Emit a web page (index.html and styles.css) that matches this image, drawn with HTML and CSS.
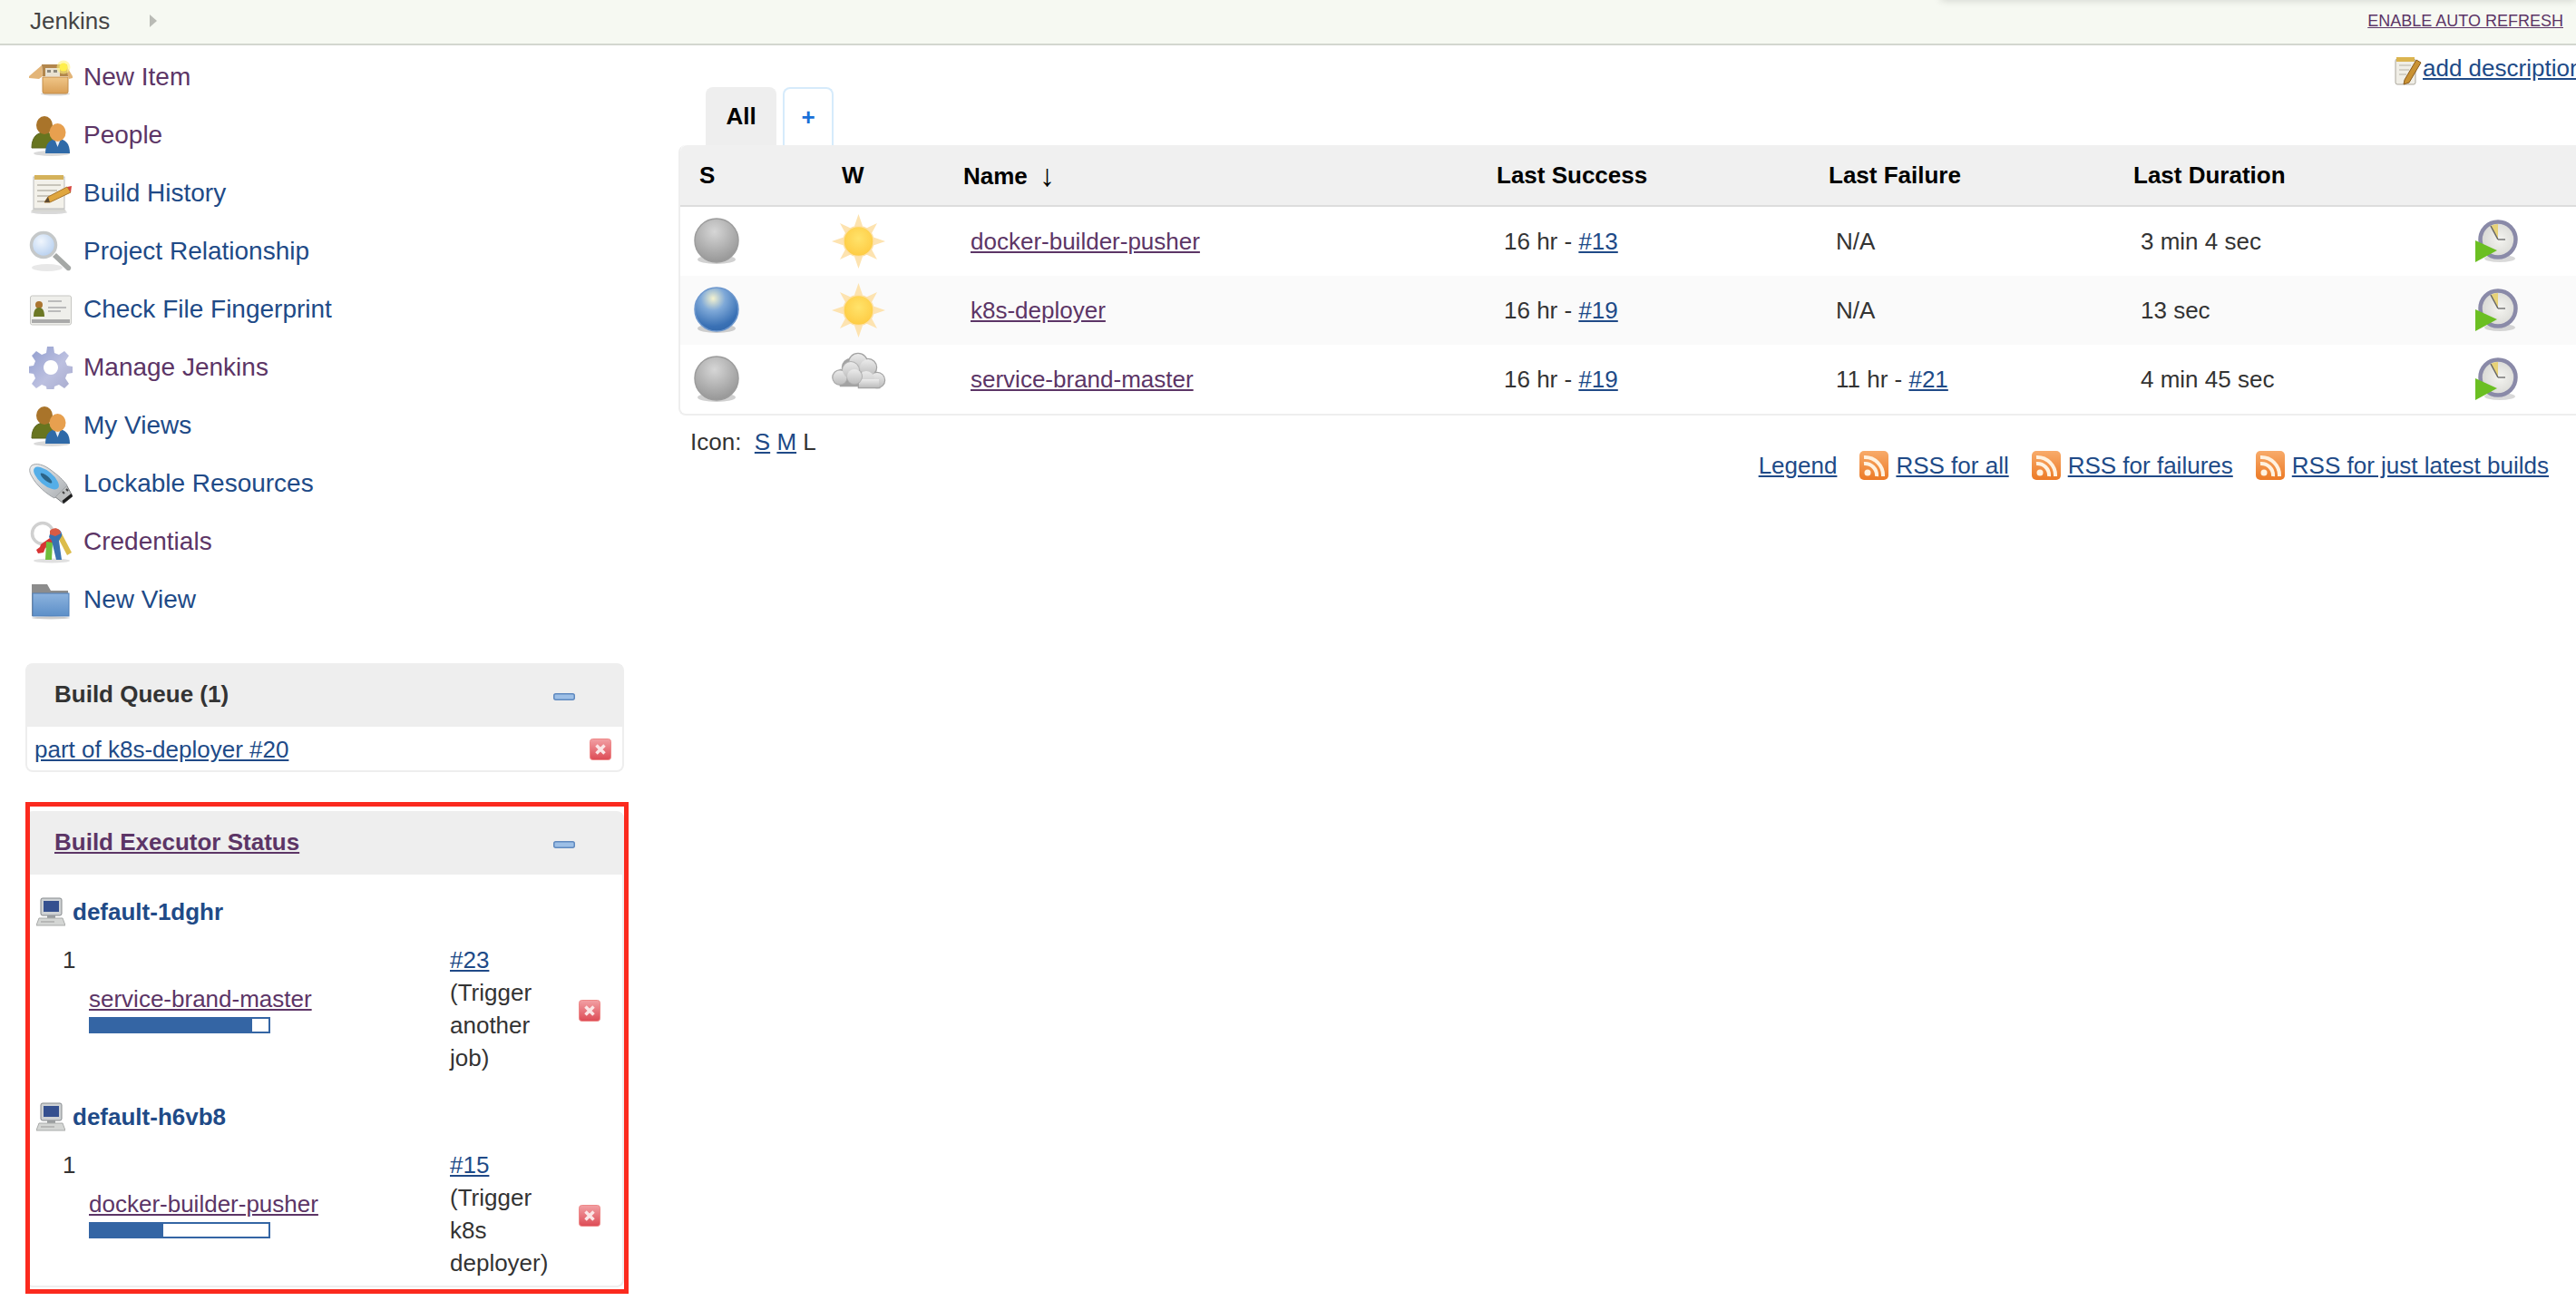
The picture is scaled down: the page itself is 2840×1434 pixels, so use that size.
FILE: index.html
```html
<!DOCTYPE html>
<html lang="en">
<head>
<meta charset="utf-8">
<title>Jenkins</title>
<link rel="stylesheet" href="styles.css">
</head>
<body>
<svg class="defs" aria-hidden="true">
  <defs>
    <radialGradient id="gGrey" cx=".45" cy=".3" r=".75"><stop offset="0" stop-color="#d6d6d6"/><stop offset=".6" stop-color="#adadad"/><stop offset="1" stop-color="#939393"/></radialGradient>
    <radialGradient id="gBlue" cx=".42" cy=".25" r=".8"><stop offset="0" stop-color="#f5f3cf"/><stop offset=".35" stop-color="#7fa9d8"/><stop offset=".8" stop-color="#3a71b5"/><stop offset="1" stop-color="#3268ab"/></radialGradient>
    <radialGradient id="gSun" cx=".5" cy=".4" r=".65"><stop offset="0" stop-color="#ffe36b"/><stop offset="1" stop-color="#fec93f"/></radialGradient>
    <linearGradient id="gCloud" x1="0" y1="0" x2="0" y2="1"><stop offset="0" stop-color="#ebebeb"/><stop offset="1" stop-color="#bdbdbd"/></linearGradient>
    <linearGradient id="gBox" x1="0" y1="0" x2="0" y2="1"><stop offset="0" stop-color="#f0c688"/><stop offset="1" stop-color="#d99f56"/></linearGradient>
    <linearGradient id="gStop" x1="0" y1="0" x2="0" y2="1"><stop offset="0" stop-color="#f2a0a4"/><stop offset="1" stop-color="#dd4b55"/></linearGradient>
    <linearGradient id="gRss" x1="0" y1="0" x2="0" y2="1"><stop offset="0" stop-color="#f8ab6a"/><stop offset="1" stop-color="#ec7a26"/></linearGradient>
    <linearGradient id="gFolder" x1="0" y1="0" x2="0" y2="1"><stop offset="0" stop-color="#8db3de"/><stop offset="1" stop-color="#5c8fc8"/></linearGradient>
    <linearGradient id="gGear" x1="0" y1="0" x2="1" y2="1"><stop offset="0" stop-color="#8e9bcd"/><stop offset=".55" stop-color="#bcc0e0"/><stop offset="1" stop-color="#a6a9cc"/></linearGradient>
    <linearGradient id="gUsb" x1="0" y1="0" x2="1" y2="1"><stop offset="0" stop-color="#eef0f2"/><stop offset="1" stop-color="#a9adb1"/></linearGradient>
    <radialGradient id="gLens" cx=".4" cy=".35" r=".7"><stop offset="0" stop-color="#f0f6fd"/><stop offset="1" stop-color="#b3cdee"/></radialGradient>
    <radialGradient id="gFace" cx=".55" cy=".5" r=".6"><stop offset="0" stop-color="#f4f4f0"/><stop offset="1" stop-color="#d4d4d0"/></radialGradient>
    <symbol id="i-ball-grey" viewBox="0 0 52 52"><ellipse cx="25" cy="46" rx="21" ry="5" fill="#000" opacity=".18"/><circle cx="25" cy="25" r="24" fill="url(#gGrey)" stroke="#9c9c9c" stroke-width="1.5"/></symbol>
    <symbol id="i-ball-blue" viewBox="0 0 52 52"><ellipse cx="25" cy="46" rx="21" ry="5" fill="#000" opacity=".18"/><circle cx="25" cy="25" r="24" fill="url(#gBlue)" stroke="#6d97cd" stroke-width="1.5"/></symbol>
    <symbol id="i-sun" viewBox="0 0 60 60">
      <g fill="#fde3b0"><path d="M29.500 0l4.500 13h-9z"/><path d="M29.500 60l4.500-13h-9z"/><path d="M0 30l13-4.500v9z"/><path d="M59 30l-13-4.500v9z"/><path d="M9 10l13 6-6 7z"/><path d="M50 10l-13 6 6 7z"/><path d="M9 50l13-6-6-7z"/><path d="M50 50l-13-6 6-7z"/></g>
      <circle cx="29.500" cy="30" r="16.500" fill="url(#gSun)" stroke="#fde0a5" stroke-width="1.500"/>
    </symbol>
    <symbol id="i-cloud" viewBox="0 0 60 60">
      <g fill="#a3a3a3" stroke="#a3a3a3" stroke-width="2.500"><circle cx="29" cy="12" r="10"/><circle cx="40" cy="17" r="9"/><circle cx="50" cy="31" r="8"/><circle cx="9" cy="28" r="7.500"/><circle cx="21" cy="17" r="9"/><rect x="10" y="20" width="38" height="17"/><rect x="30" y="30" width="22" height="9"/></g>
      <g fill="url(#gCloud)"><circle cx="29" cy="12" r="10"/><circle cx="40" cy="17" r="9"/><circle cx="50" cy="31" r="8"/><circle cx="38" cy="30" r="9"/><rect x="30" y="30" width="22" height="9"/></g>
      <g fill="#b0b0b0"><circle cx="9" cy="28" r="8.500"/><circle cx="21" cy="20" r="10"/><circle cx="25" cy="27" r="9"/></g>
      <g fill="url(#gCloud)"><circle cx="9" cy="28" r="7.500"/><circle cx="21" cy="20" r="9"/><circle cx="25" cy="27" r="8"/></g>
    </symbol>
    <symbol id="i-clock" viewBox="0 0 48 48">
      <ellipse cx="28" cy="43" rx="17" ry="4" fill="#000" opacity=".15"/>
      <circle cx="26" cy="22" r="19.500" fill="url(#gFace)" stroke="#8a8aa8" stroke-width="4.500"/>
      <path d="M26 22L18 7A17 17 0 0 1 26 5Z" fill="#e7d278"/><path d="M26 22L18 7" stroke="#666" stroke-width="1.500"/><path d="M26 22h8" stroke="#777" stroke-width="1.500"/>
      <path d="M1 23L25 34 1 47Z" fill="#6bbf22"/>
    </symbol>
    <symbol id="i-stop" viewBox="0 0 24 24"><rect x="0.500" y="0.500" width="23" height="23" rx="3" fill="url(#gStop)" stroke="#e88" stroke-width="1"/><path d="M7.500 7.500l9 9M16.500 7.500l-9 9" stroke="#fbe6e6" stroke-width="3.500"/></symbol>
    <symbol id="i-minus" viewBox="0 0 24 8"><rect x="0.750" y="0.750" width="22.500" height="6.500" rx="2" fill="#9dbfe6" stroke="#5f89bf" stroke-width="1.500"/></symbol>
    <symbol id="i-rss" viewBox="0 0 32 32"><rect width="32" height="32" rx="5" fill="url(#gRss)"/><circle cx="9" cy="24" r="3.500" fill="#fff2e0"/><path d="M5 14a13 13 0 0 1 14 14M5 7a20 20 0 0 1 21 21" fill="none" stroke="#fff2e0" stroke-width="4"/></symbol>
    <symbol id="i-computer" viewBox="0 0 32 32"><rect x="5" y="1" width="23" height="19" rx="2" fill="#cfd2d4" stroke="#85898c" stroke-width="1"/><rect x="8" y="4" width="17" height="12" fill="#35508f"/><rect x="12" y="20" width="9" height="3" fill="#9a9d9f"/><path d="M3 23h26l3 8H0z" fill="#d4d6d4" stroke="#a9abaa" stroke-width="1"/><path d="M5 27h15" stroke="#999" stroke-width="1"/></symbol>
    <symbol id="i-note" viewBox="0 0 30 32"><rect x="1" y="3" width="22" height="28" rx="2" fill="#f0eee6" stroke="#aaa69b" stroke-width="1"/><rect x="2" y="1" width="20" height="5" fill="#dbb44f"/><path d="M5 10h13M5 15h11M5 20h8" stroke="#c9c6ba" stroke-width="1.500"/><path d="M11 26L24 4l5 3-13 22-6 2z" fill="#c99233" stroke="#8a5a1c" stroke-width="1"/></symbol>
    <symbol id="i-box" viewBox="0 0 48 48">
      <ellipse cx="29" cy="42.500" rx="16" ry="2" fill="#000" opacity=".14"/>
      <path d="M14 10h28l1 13H15z" fill="#b2864c"/><path d="M18 14h16v9H18z" fill="#e9e2d2"/><path d="M20 16h4v3h-4zM27 16h4v3h-4z" fill="#8f8a7e"/>
      <path d="M15 24h28v16a2 2 0 0 1-2 2H17a2 2 0 0 1-2-2z" fill="url(#gBox)" stroke="#c48d48" stroke-width="1"/>
      <path d="M15 23L14 11 0 23v2l11 1zM43 23l-1-10 6 10v2l-4 1z" fill="#e3b578"/>
      <circle cx="38" cy="13" r="7.500" fill="#fff27d" opacity=".6"/><circle cx="38" cy="13" r="4.500" fill="#ffef4a"/>
    </symbol>
    <symbol id="i-people" viewBox="0 0 48 48">
      <ellipse cx="25" cy="44" rx="20" ry="3" fill="#000" opacity=".15"/>
      <path d="M3 38c0-12 6-17 14-17s14 5 14 17z" fill="#68751f" stroke="#59631a" stroke-width="1"/><ellipse cx="17" cy="13" rx="9" ry="10" fill="#a9742a"/>
      <path d="M18 44c0-11 5-16 13.500-16S45 33 45 44z" fill="#2f6aa8"/><path d="M28 28h7l-3.500 9z" fill="#e8eef5"/><ellipse cx="31.500" cy="21" rx="9" ry="10" fill="#e7a04f"/>
    </symbol>
    <symbol id="i-pad" viewBox="0 0 48 48">
      <ellipse cx="22" cy="45" rx="20" ry="2" fill="#000" opacity=".15"/>
      <path d="M5 7h34v34l2 3H2l3-3z" fill="#d6d6d2"/><rect x="5" y="6" width="34" height="35" fill="#f3f1ea" stroke="#bbb" stroke-width="1"/><rect x="6" y="4" width="32" height="5" fill="#d4b25a"/>
      <path d="M9 15h26M9 21h22M9 27h16M9 33h10" stroke="#c8c5bb" stroke-width="2"/>
      <path d="M17 34l4-6L42 17l4 6-23 11z" fill="#dfa63f" stroke="#a9752a" stroke-width="1"/><path d="M42 17l4 6 1-7z" fill="#d7443c"/><path d="M17 34l4-6 2 6z" fill="#5c4a33"/>
    </symbol>
    <symbol id="i-mag" viewBox="0 0 48 48">
      <ellipse cx="20" cy="42" rx="17" ry="4" fill="#000" opacity=".09"/>
      <path d="M26 30l4-4 16 15a3 3 0 0 1-4 4z" fill="#a5a8a6"/>
      <circle cx="16" cy="17" r="13.500" fill="url(#gLens)" stroke="#c5c8c9" stroke-width="3.500"/>
    </symbol>
    <symbol id="i-card" viewBox="0 0 48 48">
      <rect x="1.500" y="9" width="45" height="32" rx="2" fill="#efefeb" stroke="#c6c6c2" stroke-width="1"/>
      <circle cx="11" cy="19" r="4" fill="#ab7530"/><path d="M5 32c0-8 3-10 6-10s6 2 6 10z" fill="#6c7825"/>
      <path d="M21 15h15M21 22h20M21 26h14" stroke="#bbb" stroke-width="2"/><rect x="3" y="35" width="42" height="4" fill="#aaa"/>
    </symbol>
    <symbol id="i-gear" viewBox="0 0 48 48">
      <path fill="url(#gGear)" fill-rule="evenodd" d="M20 1h7l1 7 5 2 6-4 5 5-4 6 2 5 6 1v7l-6 1-2 5 4 6-5 5-6-4-5 2-1 7h-7l-1-7-5-2-6 4-5-5 4-6-2-5-6-1v-7l6-1 2-5-4-6 5-5 6 4 5-2zM24 16a8 8 0 1 0 .01 0z"/>
      <circle cx="24" cy="24" r="5" fill="#fff"/>
    </symbol>
    <symbol id="i-usb" viewBox="0 0 48 48">
      <path d="M28 38l13-13 7 13-10 8z" fill="#bcbebf" stroke="#77797b" stroke-width="1"/><path d="M38 46l10-8-1.500-3-10 8z" fill="#1c1c1c"/><path d="M37 33l2 2M41 30l2 2" stroke="#444" stroke-width="2"/>
      <path d="M3 4C8 1 16 3 24 9c8 6 14 11 18 17L28 40C20 36 8 26 3 16 0 11 0 7 3 4z" fill="url(#gUsb)" stroke="#9fa3a6" stroke-width="1"/>
      <ellipse cx="19" cy="18" rx="17" ry="7.500" transform="rotate(40 19 18)" fill="#55aee8"/><ellipse cx="19" cy="18" rx="8" ry="2.500" transform="rotate(40 19 18)" fill="#2c6487"/>
    </symbol>
    <symbol id="i-keys" viewBox="0 0 48 48">
      <ellipse cx="25" cy="45" rx="20" ry="2.500" fill="#000" opacity=".12"/>
      <circle cx="15" cy="15" r="11.500" fill="none" stroke="#d0d0d0" stroke-width="3.500"/>
      <path d="M31 18l5-3 11 21-5 3z" fill="#dcbc4a"/>
      <path d="M13 27l10-7 4 5-9 6-2 5-6 1-2-4 4-3z" fill="#d83333"/>
      <path d="M19 24l7 1-1 19h-7z" fill="#6fbe3c"/>
      <path d="M24 12a7 7 0 0 1 12 6l-3 5 3 21h-6l-5-21-3-4z" fill="#3a72b0"/>
      <path d="M23 12c4-5 12-3 12 3l-6 3-6-2z" fill="#d95b45"/>
    </symbol>
    <symbol id="i-folder" viewBox="0 0 48 48">
      <path d="M3 7h17l4 7h19v28H3z" fill="#8c8c8c"/>
      <rect x="4" y="17" width="40" height="25" fill="url(#gFolder)" stroke="#4f7fb8" stroke-width="1"/>
      <ellipse cx="24" cy="44" rx="21" ry="1.500" fill="#000" opacity=".2"/>
    </symbol>
  </defs>
</svg>

<header class="topbar">
  <div class="crumbs"><span class="crumb">Jenkins</span><span class="crumb-arrow"></span></div>
  <a class="refresh" href="#r">ENABLE AUTO REFRESH</a>
  <div class="search-shadow"></div>
</header>

<div class="page">
  <aside class="side">
    <nav class="tasks">
      <a class="task seen" href="#a"><svg class="ic i48"><use href="#i-box"/></svg>New Item</a>
      <a class="task seen" href="#a"><svg class="ic i48"><use href="#i-people"/></svg>People</a>
      <a class="task" href="#b"><svg class="ic i48"><use href="#i-pad"/></svg>Build History</a>
      <a class="task" href="#b"><svg class="ic i48"><use href="#i-mag"/></svg>Project Relationship</a>
      <a class="task" href="#b"><svg class="ic i48"><use href="#i-card"/></svg>Check File Fingerprint</a>
      <a class="task seen" href="#a"><svg class="ic i48"><use href="#i-gear"/></svg>Manage Jenkins</a>
      <a class="task" href="#b"><svg class="ic i48"><use href="#i-people"/></svg>My Views</a>
      <a class="task" href="#b"><svg class="ic i48"><use href="#i-usb"/></svg>Lockable Resources</a>
      <a class="task seen" href="#a"><svg class="ic i48"><use href="#i-keys"/></svg>Credentials</a>
      <a class="task" href="#b"><svg class="ic i48"><use href="#i-folder"/></svg>New View</a>
    </nav>

    <section class="pane queue">
      <div class="pane-head"><span>Build Queue (1)</span><svg class="minus"><use href="#i-minus"/></svg></div>
      <div class="queue-row"><a class="link" href="#q">part of k8s-deployer #20</a><svg class="ic stop"><use href="#i-stop"/></svg></div>
    </section>

    <div class="marked">
      <section class="pane">
        <div class="pane-head"><a class="link seen" href="#e">Build Executor Status</a><svg class="minus"><use href="#i-minus"/></svg></div>
        <div class="pane-body">
          <div class="node"><svg class="ic i32"><use href="#i-computer"/></svg><a class="node-name" href="#n">default-1dghr</a></div>
          <div class="exec">
            <div class="exec-main">
              <div>1</div>
              <a class="link seen job" href="#j">service-brand-master</a>
              <div class="bar"><div class="bar-fill" style="width:91%"></div></div>
            </div>
            <div class="exec-build"><a class="link" href="#x">#23</a><br>(Trigger another job)</div>
            <svg class="ic stop exec-stop"><use href="#i-stop"/></svg>
          </div>
          <div class="node"><svg class="ic i32"><use href="#i-computer"/></svg><a class="node-name" href="#n">default-h6vb8</a></div>
          <div class="exec">
            <div class="exec-main">
              <div>1</div>
              <a class="link seen job" href="#j">docker-builder-pusher</a>
              <div class="bar"><div class="bar-fill" style="width:41%"></div></div>
            </div>
            <div class="exec-build"><a class="link" href="#x">#15</a><br>(Trigger k8s deployer)</div>
            <svg class="ic stop exec-stop"><use href="#i-stop"/></svg>
          </div>
        </div>
      </section>
      <div class="red-box"></div>
    </div>
  </aside>

  <main class="main">
    <div class="desc"><svg class="ic note"><use href="#i-note"/></svg><a class="link" href="#d">add description</a></div>
    <div class="tabs"><span class="tab active">All</span><a class="tab add" href="#t">+</a></div>
    <table class="jobs">
      <colgroup><col class="c-s"><col class="c-w"><col class="c-n"><col class="c-ls"><col class="c-lf"><col class="c-ld"><col></colgroup>
      <thead>
        <tr><th class="h-s">S</th><th>W</th><th>Name <span class="sort">↓</span></th><th>Last Success</th><th>Last Failure</th><th>Last Duration</th><th></th></tr>
      </thead>
      <tbody>
        <tr>
          <td class="t-ball"><svg class="ic ball"><use href="#i-ball-grey"/></svg></td>
          <td class="t-weather"><svg class="ic weather"><use href="#i-sun"/></svg></td>
          <td><a class="link seen" href="#j">docker-builder-pusher</a></td>
          <td>16 hr - <a class="link" href="#x">#13</a></td>
          <td>N/A</td>
          <td>3 min 4 sec</td>
          <td class="t-run"><svg class="ic i48"><use href="#i-clock"/></svg></td>
        </tr>
        <tr class="alt">
          <td class="t-ball"><svg class="ic ball"><use href="#i-ball-blue"/></svg></td>
          <td class="t-weather"><svg class="ic weather"><use href="#i-sun"/></svg></td>
          <td><a class="link seen" href="#j">k8s-deployer</a></td>
          <td>16 hr - <a class="link" href="#x">#19</a></td>
          <td>N/A</td>
          <td>13 sec</td>
          <td class="t-run"><svg class="ic i48"><use href="#i-clock"/></svg></td>
        </tr>
        <tr>
          <td class="t-ball"><svg class="ic ball"><use href="#i-ball-grey"/></svg></td>
          <td class="t-weather"><svg class="ic weather"><use href="#i-cloud"/></svg></td>
          <td><a class="link seen" href="#j">service-brand-master</a></td>
          <td>16 hr - <a class="link" href="#x">#19</a></td>
          <td>11 hr - <a class="link" href="#x">#21</a></td>
          <td>4 min 45 sec</td>
          <td class="t-run"><svg class="ic i48"><use href="#i-clock"/></svg></td>
        </tr>
      </tbody>
    </table>
    <div class="below">
      <div class="sizes">Icon:&nbsp; <a class="link" href="#s">S</a> <a class="link" href="#m">M</a> L</div>
      <div class="feeds">
        <a class="link" href="#l">Legend</a>
        <span class="feed"><svg class="ic i32"><use href="#i-rss"/></svg><a class="link" href="#f">RSS for all</a></span>
        <span class="feed"><svg class="ic i32"><use href="#i-rss"/></svg><a class="link" href="#f">RSS for failures</a></span>
        <span class="feed"><svg class="ic i32"><use href="#i-rss"/></svg><a class="link" href="#f">RSS for just latest builds</a></span>
      </div>
    </div>
  </main>
</div>
</body>
</html>
```
FILE: styles.css
```css
* { box-sizing: border-box; }
html, body { margin: 0; height: 100%; overflow: hidden; background: #fff; }
body { font: 26px/36px "Liberation Sans", Arial, sans-serif; color: #333; }

.defs { position: absolute; width: 0; height: 0; }
.ic { display: block; flex: none; filter: blur(.6px); }
.i48 { width: 48px; height: 48px; }
.i32 { width: 32px; height: 32px; }

.link { color: #204a87; text-decoration: underline; }
.seen { color: #5c3566; }

.topbar { position: relative; display: flex; align-items: center; justify-content: space-between; height: 50px; padding: 0 14px 2px 33px; background: #f6f9f2; border-bottom: 2px solid #d3d7cf; overflow: hidden; }
.crumbs { display: flex; align-items: center; }
.crumb { color: #444; }
.crumb-arrow { margin-left: 44px; width: 0; height: 0; border-left: 8px solid #b9bbb5; border-top: 7px solid transparent; border-bottom: 7px solid transparent; }
.refresh { font-size: 18px; line-height: 24px; color: #5c3566; text-decoration: underline; }
.search-shadow { position: absolute; top: -8px; right: 0; width: 700px; height: 8px; box-shadow: 0 0 10px rgba(0, 0, 0, .18); }

.page { display: flex; }
.side { flex: none; width: 748px; padding-left: 28px; }
.tasks { display: flex; flex-direction: column; margin-top: 3px; }
.task { display: flex; align-items: center; gap: 12px; height: 64px; padding-left: 4px; font-size: 28px; color: #204a87; text-decoration: none; }
.task.seen { color: #5c3566; }

.pane { width: 660px; border: 2px solid #eee; border-radius: 8px; }
.queue { margin-top: 38px; }
.pane-head { display: flex; align-items: center; justify-content: space-between; height: 68px; padding: 0 52px 4px 30px; background: #eee; font-weight: bold; }
.minus { width: 24px; height: 8px; margin-top: 6px; }
.queue-row { display: flex; align-items: center; justify-content: space-between; height: 48px; padding: 2px 12px 0 8px; }
.stop { width: 24px; height: 24px; }
.exec-stop { margin-top: 4px; }

.marked { position: relative; width: 660px; margin-top: 43px; }
.red-box { position: absolute; top: -10px; left: 0; right: -5px; bottom: -7px; border: 5px solid #fb2a1e; }
.pane-body { padding: 23px 0 7px 10px; }
.node { display: flex; align-items: center; gap: 8px; height: 36px; }
.node-name { color: #204a87; font-weight: bold; text-decoration: none; }
.exec { display: flex; align-items: center; margin: 17px 0 29px; padding-left: 29px; }
.exec:last-child { margin-bottom: 0; }
.exec-main { flex: none; align-self: flex-start; width: 427px; }
.job { display: block; margin: 7px 0 0 29px; }
.bar { width: 200px; height: 18px; margin: 2px 0 0 29px; background: #fff; border: 2px solid #3465a4; }
.bar-fill { height: 100%; background: #3465a4; }
.exec-build { flex: none; width: 120px; margin-right: 22px; }

.main { flex: 1; min-width: 0; }
.desc { display: flex; align-items: center; height: 46px; padding: 4px 0 0 1892px; white-space: nowrap; font-size: 26px; }
.note { width: 30px; height: 32px; margin: 6px 1px 0 0; }
.tabs { display: flex; gap: 7px; height: 64px; padding-left: 30px; }
.tab { display: flex; align-items: center; justify-content: center; border-radius: 8px 8px 0 0; text-decoration: none; font-weight: bold; }
.tab.active { width: 78px; background: #eee; color: #000; }
.tab.add { width: 56px; border: 2px solid #d6ebfb; border-bottom: 0; color: #1a6fd8; }

.jobs { width: 100%; table-layout: fixed; border-collapse: separate; border-spacing: 0; border-left: 2px solid #eee; border-bottom: 2px solid #eee; border-radius: 8px 0 0 8px; }
.c-s { width: 154px; }
.c-w { width: 134px; }
.c-n { width: 588px; }
.c-ls { width: 366px; }
.c-lf { width: 336px; }
.c-ld { width: 372px; }
.jobs th { height: 68px; padding: 0 0 0 24px; background: #f0f0f0; border-bottom: 2px solid #ddd; color: #000; font-weight: bold; text-align: left; }
.jobs .h-s { padding-left: 21px; }
.jobs td { height: 76px; padding: 0 0 0 32px; vertical-align: middle; }
.jobs th:first-child { border-top-left-radius: 8px; }
.alt td { background: #fafafa; }
.sort { font-weight: normal; font-size: 34px; margin-left: 6px; vertical-align: -2px; }
.jobs .t-ball { padding-left: 15px; }
.jobs .t-weather { padding-left: 13px; }
.jobs .t-run { padding-left: 28px; }
.ball { width: 52px; height: 52px; }
.weather { width: 60px; height: 60px; }

.below { display: flex; justify-content: space-between; padding: 11px 30px 0 13px; }
.feeds { display: flex; align-items: center; gap: 25px; margin-top: 26px; }
.feed { display: flex; align-items: center; gap: 8px; }
```
